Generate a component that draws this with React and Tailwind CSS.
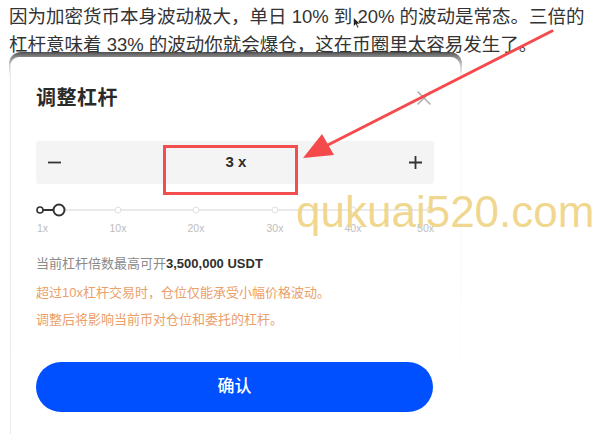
import React from "react";

const font = "font-['Liberation_Sans','Noto_Sans_CJK_SC',sans-serif]";

const ticks = [
	{ label: "1x", x: 4, align: "left" },
	{ label: "10x", x: 82 },
	{ label: "20x", x: 160 },
	{ label: "30x", x: 239 },
	{ label: "40x", x: 317 },
	{ label: "50x", x: 394, align: "right" },
];

const LeverageSlider = () => {
	return (
		<div className="mt-[19px]">
			<svg width="397" height="14" viewBox="0 0 397 14" className="block">
				<line x1="4" y1="7" x2="394" y2="7" stroke="#e3e3e3" strokeWidth="1.5" />
				<line x1="4" y1="7" x2="23" y2="7" stroke="#333" strokeWidth="2" />
				{ticks.slice(1).map((t) => (
					<circle key={t.label} cx={t.x} cy="7" r="3" fill="#fff" stroke="#e0e0e0" strokeWidth="1" />
				))}
				<circle cx="4" cy="7" r="3" fill="#fff" stroke="#333" strokeWidth="1.6" />
				<circle cx="23" cy="7" r="5.5" fill="#fff" stroke="#333" strokeWidth="2" />
			</svg>
			<div className="relative h-[14px] mt-[4px] text-[10.5px] leading-[14px] text-[#bdbdbd]">
				{ticks.map((t) => (
					<span
						key={t.label}
						className={
							t.align === "left"
								? "absolute left-[1px] top-0"
								: t.align === "right"
								? "absolute right-0 top-0"
								: "absolute top-0 -translate-x-1/2"
						}
						style={t.align ? undefined : { left: t.x }}
					>
						{t.label}
					</span>
				))}
			</div>
		</div>
	);
};

export default function App() {
	return (
		<div className={`relative w-[596px] h-[434px] overflow-hidden bg-white ${font}`}>
			<p className="h-[52px] pl-[9px] pt-[3px] text-[18.5px] leading-[28px] text-[#333] whitespace-nowrap">
				因为加密货币本身波动极大，单日 10% 到 20% 的波动是常态。三倍的
				<br />
				杠杆意味着 33% 的波动你就会爆仓，这在币圈里太容易发生了。
			</p>

			{/* modal */}
			<div className="ml-[9px] w-[453px] h-[400px] rounded-t-[12px] pt-[5px] pl-[1px] pr-[2px] bg-[linear-gradient(to_bottom,#4f4f4f_0px,#8a8a8a_5px,#d0d0d0_14px,#fafafa_24px,#ffffff_100%)]">
				<div className="h-full rounded-t-[9px] bg-white border-l border-l-[#ececec] pl-[25px] pr-[26px] pt-[27px]">
					<div className="flex items-center justify-between h-[28px]">
						<h2 className="text-[20px] font-bold text-[#2a2a2a] tracking-[0.5px]">调整杠杆</h2>
						<svg width="16" height="16" viewBox="0 0 16 16" className="mr-[2px]">
							<path d="M2 2 L14 14 M14 2 L2 14" stroke="#a5a5a5" strokeWidth="1.4" strokeLinecap="round" />
						</svg>
					</div>

					<div className="mt-[29px] h-[43px] rounded-[3px] bg-[#f4f4f5] flex items-center justify-between px-[11px]">
						<svg width="15" height="15" viewBox="0 0 15 15">
							<path d="M1 7.5 H14" stroke="#333" strokeWidth="1.8" />
						</svg>
						<span className="text-[15px] font-bold text-[#2b2b2b] pl-[2px]">3 x</span>
						<svg width="15" height="15" viewBox="0 0 15 15">
							<path d="M1 7.5 H14 M7.5 1 V14" stroke="#333" strokeWidth="1.8" />
						</svg>
					</div>

					<LeverageSlider />

					<p className="mt-[19px] text-[13px] leading-[20px] text-[#8a8a8a]">
						当前杠杆倍数最高可开<span className="text-[#2f2f2f] font-semibold">3,500,000 USDT</span>
					</p>
					<p className="mt-[9px] text-[13px] leading-[20px] text-[#eba06a]">
						超过10x杠杆交易时，仓位仅能承受小幅价格波动。
					</p>
					<p className="mt-[7px] text-[13px] leading-[20px] text-[#eba06a]">
						调整后将影响当前币对仓位和委托的杠杆。
					</p>

					<button className="mt-[32px] w-[397px] h-[50px] rounded-full bg-[#0050ff] text-white text-[17px] font-medium">
						确认
					</button>
				</div>
			</div>

			{/* watermark */}
			<div className="absolute left-[296px] top-[190px] text-[44px] leading-none text-[#f0d588]/95 font-['Liberation_Sans',sans-serif] pointer-events-none">
				qukuai520.com
			</div>

			{/* red annotation */}
			<div className="absolute left-[163px] top-[145px] w-[135px] h-[50px] border-[3px] border-[#f24e50] pointer-events-none" />
			<svg className="absolute left-0 top-0 pointer-events-none" width="596" height="434" viewBox="0 0 596 434">
				<line x1="552" y1="31" x2="322" y2="148" stroke="#f54a4c" strokeWidth="3" strokeLinecap="round" />
				<polygon points="303,158 334,155 322,134" fill="#f54a4c" />
			</svg>

			{/* mouse cursor */}
			<svg className="absolute left-[353px] top-[17px]" width="8" height="12" viewBox="0 0 8 12">
				<path d="M0.5 0.5 L0.5 9.5 L2.8 7.4 L4.4 11 L5.8 10.4 L4.3 6.9 L7.3 6.9 Z" fill="#222" stroke="#fff" strokeWidth="0.6" />
			</svg>
		</div>
	);
}
